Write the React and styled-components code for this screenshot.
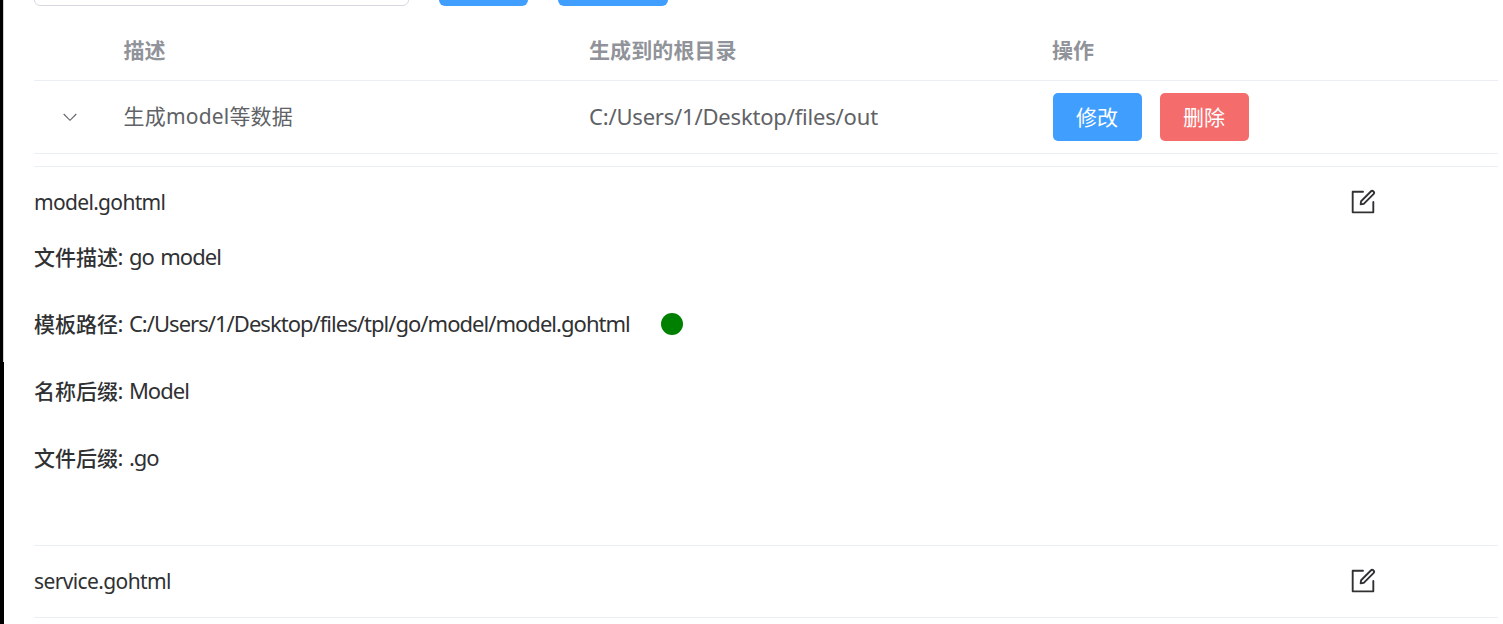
import React from "react";
import styled, { createGlobalStyle } from "styled-components";

const GlobalStyle = createGlobalStyle`
  * { box-sizing: border-box; }
  body {
    margin: 0;
    background: #fff;
    overflow: hidden;
    font-family: "Noto Sans", "Noto Sans CJK SC", sans-serif;
    font-size: 21px;
    color: #303133;
  }
`;

const Page = styled.div`
  display: flex;
  height: 624px;
`;

const WindowEdge = styled.div`
  display: flex;
  flex-direction: column;
  width: 4px;
  margin-right: 30px;
`;

const EdgeUpper = styled.div`
  height: 362px;
  background: #000;
  border-right: 1px solid #d2d2d2;
`;

const EdgeLower = styled.div`
  flex: 1;
  background: #000;
`;

const Content = styled.main`
  width: 1464px;
`;

const Toolbar = styled.div`
  display: flex;
  align-items: flex-end;
  gap: 30px;
  height: 6px;
  overflow: hidden;
`;

const SearchInput = styled.div`
  flex: none;
  width: 375px;
  height: 48px;
  border: 1px solid #d6d9e2;
  border-radius: 6px;
`;

const ToolbarButton = styled.div`
  flex: none;
  width: ${(p) => p.$width}px;
  height: 48px;
  border-radius: 6px;
  background: #409eff;
`;

const GridRow = styled.div`
  display: grid;
  grid-template-columns: 89.5px 465.5px 464px 1fr;
  align-items: center;
  height: ${(p) => p.$height}px;
  border-bottom: 1px solid #ebeef5;
  color: #606266;
`;

const HeaderRow = styled(GridRow)`
  grid-template-columns: 89.5px 465.5px 463px 1fr;
  padding-top: 14px;
  color: #909399;
  font-weight: 700;
`;

const Text = styled.span`
  font-size: ${(p) => p.$size || 21}px;
  line-height: 30px;
  white-space: nowrap;
  letter-spacing: ${(p) => p.$spacing || 0}px;
`;

const CellText = styled(Text)`
  padding-bottom: 2px;
`;

const ExpandCell = styled.div`
  padding-left: 28px;
  display: flex;
`;

const Actions = styled.div`
  display: flex;
  gap: 18px;
`;

const Button = styled.button`
  width: 89px;
  height: 48px;
  padding: 0 1px 0 0;
  border: 0;
  border-radius: 5px;
  background: ${(p) => (p.$danger ? "#f56c6c" : "#409eff")};
  color: #fff;
  font: inherit;
  line-height: 46px;
`;

const Collapse = styled.section`
  margin-top: 12px;
  border-top: 1px solid #ebeef5;
`;

const PanelHeader = styled.div`
  display: flex;
  align-items: center;
  justify-content: space-between;
  height: 71px;
  padding: 0 120px 2px 0;
`;

const Panel = styled.article`
  border-bottom: 1px solid #ebeef5;
`;

const Details = styled.div`
  display: flex;
  flex-direction: column;
  gap: 37px;
  height: 307px;
  padding-top: 4px;
`;

const Detail = styled.div`
  display: flex;
  align-items: center;
  height: 30px;
`;

const Label = styled(Text)`
  width: 83.5px;
  font-weight: 500;
`;

const Value = styled(Text)`
  width: ${(p) => (p.$width ? `${p.$width}px` : "auto")};
  padding-bottom: 2px;
  word-spacing: 1.7px;
`;

const StatusDot = styled.i`
  width: 22px;
  height: 22px;
  margin-left: 31px;
  border-radius: 50%;
  background: #008000;
`;

const ChevronDown = () => (
  <svg width="16" height="16" viewBox="0 0 16 16" fill="none" stroke="#606266" strokeWidth="1.1">
    <path d="M1.7 5 8 11.3 14.3 5" />
  </svg>
);

const EditIcon = () => (
  <svg width="30" height="30" viewBox="0 0 1024 1024" fill="#303133">
    <path d="M832 512a32 32 0 1 1 64 0v352a32 32 0 0 1-32 32H160a32 32 0 0 1-32-32V160a32 32 0 0 1 32-32h352a32 32 0 0 1 0 64H192v640h640z" />
    <path d="m469.952 554.24 52.8-7.552L847.104 222.4a32 32 0 1 0-45.248-45.248L477.44 501.44l-7.552 52.8zm422.4-422.4a96 96 0 0 1 0 135.808l-331.84 331.84a32 32 0 0 1-18.112 9.088L436.8 623.68a32 32 0 0 1-36.224-36.224l15.104-105.6a32 32 0 0 1 9.024-18.112l331.904-331.84a96 96 0 0 1 135.744 0z" />
  </svg>
);

const details = [
  { label: "文件描述", value: "go model" },
  {
    label: "模板路径",
    value: "C:/Users/1/Desktop/files/tpl/go/model/model.gohtml",
    width: 512.5,
    ready: true,
  },
  { label: "名称后缀", value: "Model" },
  { label: "文件后缀", value: ".go" },
];

export default function App() {
  return (
    <>
      <GlobalStyle />
      <Page>
        <WindowEdge>
          <EdgeUpper />
          <EdgeLower />
        </WindowEdge>
        <Content>
          <Toolbar>
            <SearchInput />
            <ToolbarButton $width={89} />
            <ToolbarButton $width={110} />
          </Toolbar>
          <HeaderRow $height={75}>
            <span />
            <Text>描述</Text>
            <Text $spacing={0.1}>生成到的根目录</Text>
            <Text>操作</Text>
          </HeaderRow>
          <GridRow $height={73}>
            <ExpandCell>
              <ChevronDown />
            </ExpandCell>
            <CellText $spacing={0.2}>生成model等数据</CellText>
            <CellText $size={22} $spacing={-0.19}>
              C:/Users/1/Desktop/files/out
            </CellText>
            <Actions>
              <Button>修改</Button>
              <Button $danger>删除</Button>
            </Actions>
          </GridRow>
          <Collapse>
            <Panel>
              <PanelHeader>
                <Text $spacing={-0.67}>model.gohtml</Text>
                <EditIcon />
              </PanelHeader>
              <Details>
                {details.map((d) => (
                  <Detail key={d.label}>
                    <Label>{d.label}</Label>
                    <Value $size={22} $spacing={-0.97} $width={d.width}>
                      {": " + d.value}
                    </Value>
                    {d.ready && <StatusDot />}
                  </Detail>
                ))}
              </Details>
            </Panel>
            <Panel>
              <PanelHeader>
                <Text $spacing={-0.62}>service.gohtml</Text>
                <EditIcon />
              </PanelHeader>
            </Panel>
          </Collapse>
        </Content>
      </Page>
    </>
  );
}
